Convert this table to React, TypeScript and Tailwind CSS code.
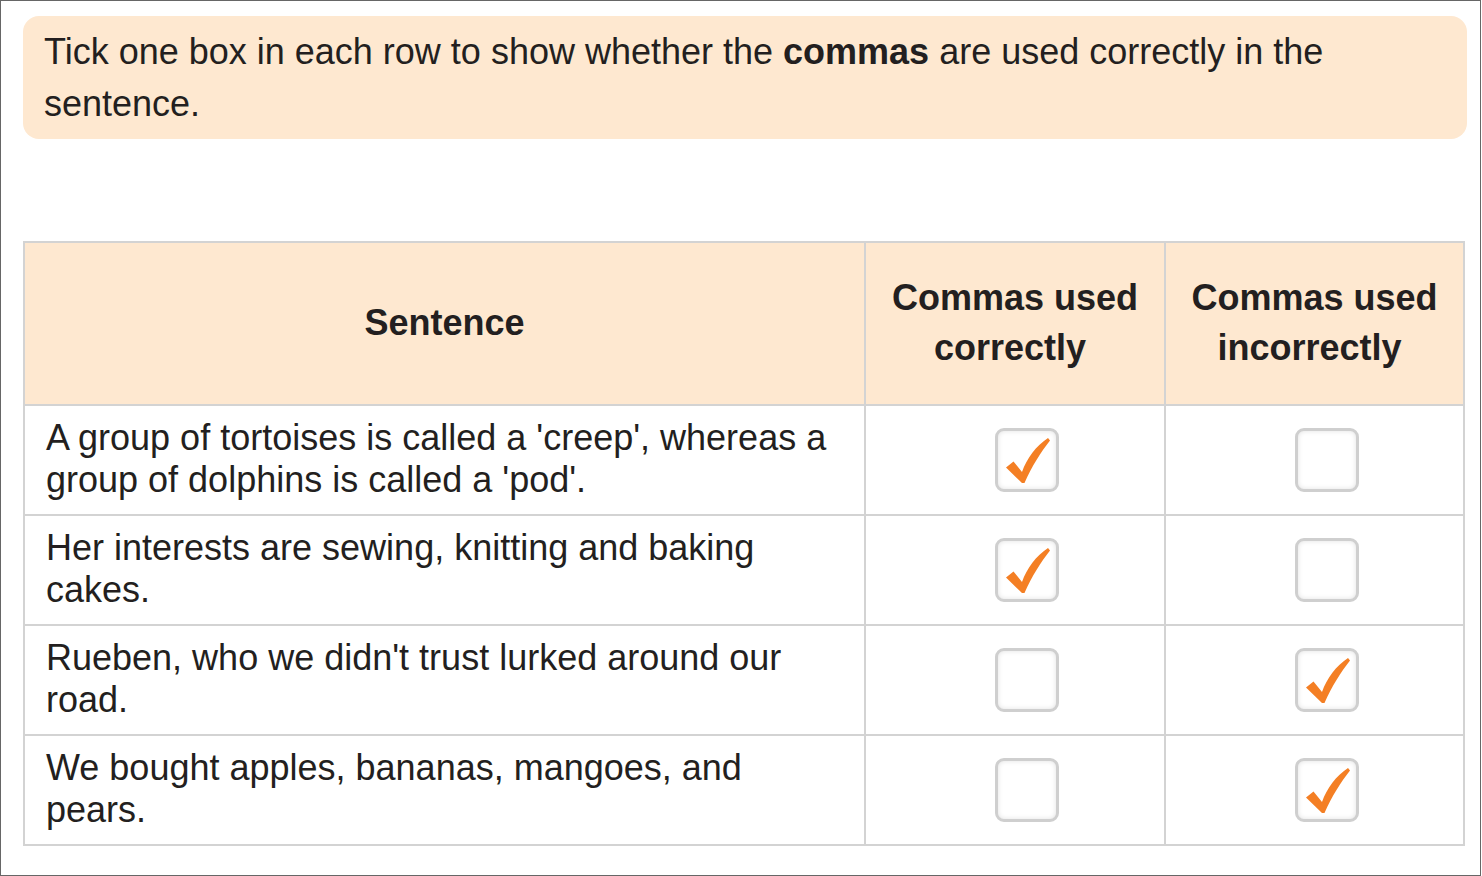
import React from "react";

const rows: { text: string; correct: boolean }[] = [
  { text: "A group of tortoises is called a 'creep', whereas a group of dolphins is called a 'pod'.", correct: true },
  { text: "Her interests are sewing, knitting and baking cakes.", correct: true },
  { text: "Rueben, who we didn't trust lurked around our road.", correct: false },
  { text: "We bought apples, bananas, mangoes, and pears.", correct: false },
];

function Check() {
  return (
    <svg width="64" height="64" viewBox="0 0 64 64" className="absolute left-[-3px] top-[-3px]">
      <path
        d="M11 39.5 L18.5 33.5 L27 44 C32 30 41 18 53 10 L55 12.5 C46 24 37 38 29.5 55 L27 55 Z"
        fill="#f47f24"
      />
    </svg>
  );
}

function Box({ checked }: { checked: boolean }) {
  return (
    <div className="relative w-[64px] h-[64px] rounded-[9px] border-[3px] border-[#cfcfcf] bg-white shadow-[inset_0_0_5px_rgba(0,0,0,0.12)]">
      {checked && <Check />}
    </div>
  );
}

export default function App() {
  return (
    <div
      className="w-[1481px] h-[876px] border border-[#666] bg-white text-[#231f20] overflow-hidden"
      style={{ fontFamily: '"Liberation Sans", Arial, sans-serif' }}
    >
      <div className="mt-[15px] ml-[22px] w-[1444px] h-[123px] rounded-[16px] bg-[#fee8d0] pl-[21px] pt-[10px] text-[36px] leading-[52px]">
        Tick one box in each row to show whether the <b>commas</b> are used correctly in the sentence.
      </div>
      <div className="mt-[102px] ml-[22px] w-[1442px] grid grid-cols-[839px_298px_297px] grid-rows-[161px_108px_108px_108px_108px] gap-[2px] p-[2px] bg-[#d3d3d3]">
        <div className="bg-[#fee8d0] flex items-center justify-center font-bold text-[36px] leading-[50px] pb-[2px]">Sentence</div>
        <div className="bg-[#fee8d0] flex items-center justify-center text-center font-bold text-[36px] leading-[50px] px-2 pb-[2px]">
          Commas used correctly{"\u00a0"}
        </div>
        <div className="bg-[#fee8d0] flex items-center justify-center text-center font-bold text-[36px] leading-[50px] px-2 pb-[2px]">
          Commas used incorrectly{"\u00a0"}
        </div>
        {rows.map((r, i) => (
          <React.Fragment key={i}>
            <div className="bg-white flex items-center pl-[21px] pr-[30px] text-[36px] leading-[42px] pb-[2px]">
              {r.text}
            </div>
            <div className="bg-white flex items-center justify-center pl-6">
              <Box checked={r.correct} />
            </div>
            <div className="bg-white flex items-center justify-center pl-6">
              <Box checked={!r.correct} />
            </div>
          </React.Fragment>
        ))}
      </div>
    </div>
  );
}
